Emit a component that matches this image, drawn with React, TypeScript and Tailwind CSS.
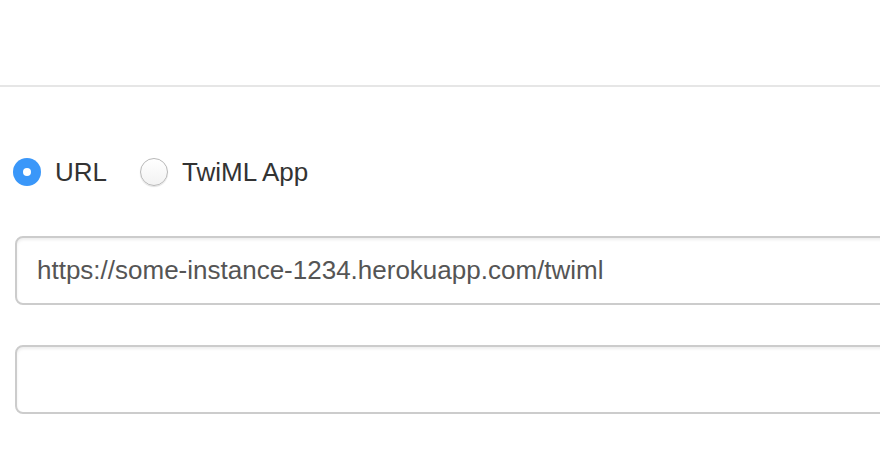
import React from "react";

function Radio({ checked, label }: { checked: boolean; label: string }) {
  return (
    <label className="flex items-center">
      {checked ? (
        <span className="w-[28px] h-[28px] rounded-full bg-[#3a97f9] flex items-center justify-center">
          <span className="w-[8px] h-[8px] rounded-full bg-white" />
        </span>
      ) : (
        <span className="w-[28px] h-[28px] rounded-full border border-[#b8b8b8] bg-gradient-to-b from-white to-[#f2f2f2] shadow-[0_1px_1px_rgba(0,0,0,0.12)]" />
      )}
      <span className="ml-[14px] text-[26px] leading-none text-[#333]">{label}</span>
    </label>
  );
}

export default function App() {
  return (
    <div
      className="w-[880px] h-[470px] overflow-hidden bg-white"
      style={{ fontFamily: '"Liberation Sans", Arial, sans-serif' }}
    >
      <div className="h-[85px]" />
      <div className="h-[2px] bg-[#e6e6e6]" />

      <div className="mt-[71px] pl-[13px] flex items-center gap-[33px] h-[28px]">
        <Radio checked label="URL" />
        <Radio checked={false} label="TwiML App" />
      </div>

      <div className="pl-[15px] mt-[50px] flex flex-col gap-[40px]">
        <div className="w-[900px] h-[69px] rounded-[8px] border-2 border-[#cccccc] shadow-[inset_0_2px_3px_rgba(0,0,0,0.07)] flex items-center pl-[20px] text-[26px] text-[#555]">
          https://some-instance-1234.herokuapp.com/twiml
        </div>
        <div className="w-[900px] h-[69px] rounded-[8px] border-2 border-[#cccccc] shadow-[inset_0_2px_3px_rgba(0,0,0,0.07)]" />
      </div>
    </div>
  );
}
